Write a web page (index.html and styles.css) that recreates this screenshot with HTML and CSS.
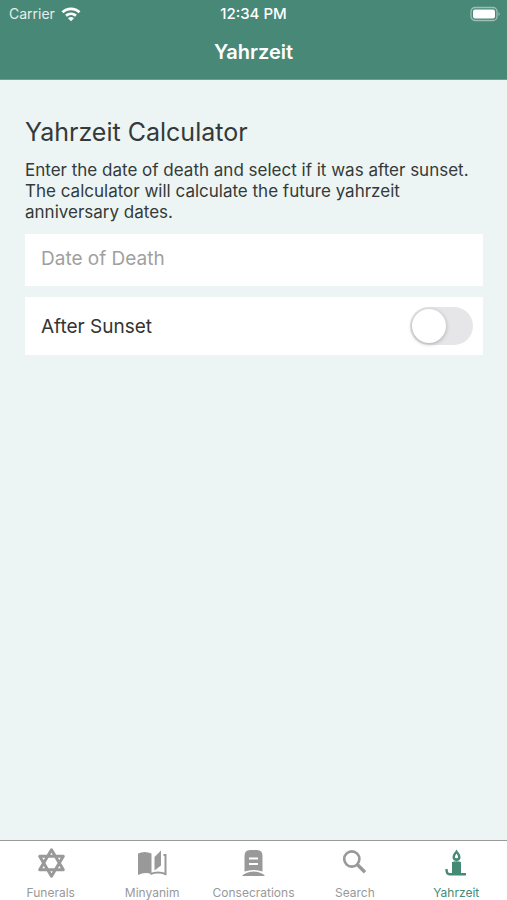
FILE: index.html
```
<!DOCTYPE html>
<html lang="en">
<head>
<meta charset="utf-8">
<meta name="viewport" content="width=device-width, initial-scale=1">
<title>Yahrzeit</title>
<link rel="stylesheet" href="styles.css">
</head>
<body>
<header class="top">
  <div class="status">
    <span class="carrier">Carrier
      <svg width="20" height="16" viewBox="0 0 20 16" fill="none" stroke="currentColor" stroke-width="2.800" aria-hidden="true"><path d="M1.500 6.200C6 1.700 14 1.700 18.500 6.200M5 9.700C8 7.200 12 7.200 15 9.700"/><path d="M7 12.200Q10 9.800 13 12.200L10 15.200Z" fill="currentColor" stroke="none"/></svg>
    </span>
    <time class="clock">12:34 PM</time>
    <svg class="battery" width="31" height="16" viewBox="0 0 31 16" aria-hidden="true"><rect x="1" y="1.500" width="26" height="13" rx="4" fill="none" stroke="#9cc0b3" stroke-width="1.300"/><rect x="3" y="3.500" width="22" height="9" rx="2" fill="#fff"/><path d="M28.500 6Q31 8 28.500 10Z" fill="#9cc0b3"/></svg>
  </div>
  <div class="bar-title">Yahrzeit</div>
</header>
<main class="content">
  <h1>Yahrzeit Calculator</h1>
  <p>Enter the date of death and select if it was after sunset. The calculator will calculate the future yahrzeit anniversary dates.</p>
  <input class="date" type="text" placeholder="Date of Death" aria-label="Date of Death">
  <label class="row"><span>After Sunset</span><input class="switch" type="checkbox" role="switch"></label>
</main>
<nav class="tabs">
  <a href="#funerals"><svg viewBox="0 0 32 32" aria-hidden="true"><path d="M16.500 2.800 28.300 22.800H4.700ZM16.500 29.200 4.700 9.200H28.300Z" fill="none" stroke="currentColor" stroke-width="3" stroke-linejoin="round"/></svg><span>Funerals</span></a>
  <a href="#minyanim"><svg viewBox="0 0 32 32" aria-hidden="true"><path d="M2 6.500Q8.500 3.300 15.500 6.500V27Q8.500 24.500 2 28ZM18.500 10 25 3.500V18.500L18.500 23.500Z" fill="currentColor"/><path d="M14.500 27Q22 24 29.500 27V8H27.500" fill="none" stroke="currentColor" stroke-width="2"/></svg><span>Minyanim</span></a>
  <a href="#consecrations"><svg viewBox="0 0 32 32" aria-hidden="true"><path d="M7.500 24.500V9Q7.500 3 13 3H20Q25.500 3 25.500 9V24.500Q16.500 21.500 7.500 24.500ZM5 29Q8 25 16.500 24.500Q25 25 28 29Z" fill="currentColor"/><path d="M12 11.500H21M12 17H21" stroke="#fff" stroke-width="2.200"/></svg><span>Consecrations</span></a>
  <a href="#search"><svg viewBox="0 0 32 32" aria-hidden="true"><circle cx="12.800" cy="12" r="7.600" fill="none" stroke="currentColor" stroke-width="2.600"/><path d="M18 17.200 26 25.200" stroke="currentColor" stroke-width="3.400"/></svg><span>Search</span></a>
  <a class="active" href="#yahrzeit" aria-current="page"><svg viewBox="0 0 32 32" aria-hidden="true"><path fill-rule="evenodd" d="M16.500 2.500C18 5.500 20.500 7 20.500 10A4 4 0 0 1 12.500 10C12.500 7 15 5.500 16.500 2.500ZM16.500 6.500Q13.300 11 16.500 11.300Q19.700 11 16.500 6.500ZM12 15Q16.500 13.500 21 15V27H12Z" fill="currentColor"/><path d="M6.500 22Q6.500 27.300 9.500 27.300H26" fill="none" stroke="currentColor" stroke-width="2.400"/></svg><span>Yahrzeit</span></a>
</nav>
</body>
</html>
```
FILE: styles.css
```
* { box-sizing: border-box; }
body {
  margin: 0;
  min-height: 100vh;
  display: flex;
  flex-direction: column;
  background: #edf4f4;
  color: #333a39;
  font-family: Inter, "Liberation Sans", sans-serif;
}
.top {
  height: 80px;
  background: #488877;
  border-bottom: 1px solid #6b9f91;
  color: #fff;
}
.status {
  display: grid;
  grid-template-columns: 1fr auto 1fr;
  align-items: center;
  height: 27px;
  padding: 0 6px;
  font-size: 14px;
}
.carrier { display: flex; align-items: center; gap: 6px; padding-left: 3px; color: #e4efeb; }
.carrier svg { color: #fff; }
.clock { font-size: 15px; font-weight: 500; }
.battery { justify-self: end; }
.bar-title {
  text-align: center;
  font-size: 20px;
  line-height: 50px;
  font-weight: 600;
}
.content {
  flex: 1;
  display: flex;
  flex-direction: column;
  padding: 36px 24px 0 25px;
}
h1 { margin: 0; font-size: 25px; line-height: 32px; font-weight: 400; }
p { margin: 12px 0 11px; font-size: 17px; line-height: 21px; }
.date {
  width: 100%;
  height: 52px;
  padding: 0 16px 4px;
  border: 0;
  background: #fff;
  color: inherit;
  font: inherit;
  font-size: 19px;
}
.date::placeholder { color: #a0a0a0; opacity: 1; }
.row {
  display: flex;
  align-items: center;
  justify-content: space-between;
  height: 58px;
  margin-top: 11px;
  padding: 0 10px 0 16px;
  background: #fff;
  color: #333;
  font-size: 19px;
}
.switch {
  appearance: none;
  display: flex;
  align-items: center;
  width: 63px;
  height: 38px;
  margin: 0;
  padding: 2px;
  border-radius: 19px;
  background: #e6e6e8;
}
.switch::before {
  content: "";
  width: 34px;
  height: 34px;
  border-radius: 50%;
  background: #fff;
  box-shadow: 0 1px 4px #0004;
}
.switch:checked { justify-content: flex-end; background: #488877; }
.tabs {
  display: grid;
  grid-template-columns: repeat(5, 1fr);
  height: 60px;
  border-top: 1px solid #999;
  background: #fff;
}
.tabs a {
  display: flex;
  flex-direction: column;
  align-items: center;
  gap: 6px;
  padding-top: 6px;
  color: #999;
  font-size: 12px;
  line-height: 16px;
  text-decoration: none;
}
.tabs svg { width: 32px; height: 32px; }
.tabs .active { color: #458a75; }
```
